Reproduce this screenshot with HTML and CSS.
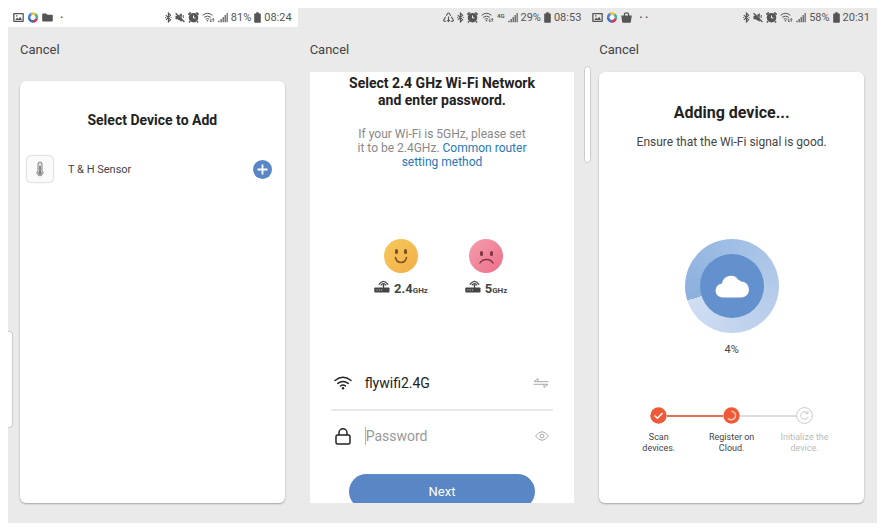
FILE: index.html
```
<!DOCTYPE html>
<html lang="en">
<head>
    <meta charset="UTF-8">
    <meta name="viewport" content="width=device-width, initial-scale=1.0">
    <title>Add Device</title>
    <link rel="stylesheet" href="styles.css">
</head>
<body>

<!-- shared icons -->
<svg class="sprite" aria-hidden="true">
    <symbol id="i-image" viewBox="0 0 11 11"><path fill-rule="evenodd" d="M1 1h9q.8 0 .8.8v7.4q0 .8-.8.8H1q-.8 0-.8-.8V1.800Q.2 1 1 1zm.5 1.200v6.600h8V2.200zM2.200 8l1.900-2.500 1.300 1.400L7.200 4.800 9 8zM3 3.200h1.400v1.200H3z"/></symbol>
    <symbol id="i-swirl" viewBox="0 0 12 12">
        <g fill="none" stroke-width="2.800">
            <path d="M1.900 5.500A4.200 4.200 0 0 1 5 1.900" stroke="#4a86e8"/>
            <path d="M4 2.300A4.200 4.200 0 0 1 9 3" stroke="#f2c037"/>
            <path d="M8.800 2.800A4.200 4.200 0 0 1 9.900 7.500" stroke="#38b6a0"/>
            <path d="M9.900 7.400A4.200 4.200 0 0 1 5.500 10.200" stroke="#d8365f"/>
            <path d="M6 10.200A4.200 4.200 0 0 1 1.800 5.500" stroke="#3f6fc4"/>
        </g>
        <path d="M6 3.300 8.700 6 6 8.700 3.300 6z" fill="#fff"/>
    </symbol>
    <symbol id="i-folder" viewBox="0 0 11 10"><path d="M1 1h3.200l1.200 1.300H10q.8 0 .8.800v5.200q0 .8-.8.8H1q-.8 0-.8-.8V1.800Q.2 1 1 1z"/></symbol>
    <symbol id="i-bag" viewBox="0 0 11 11"><path d="M.2 3.400h10.600L9.800 10q-.1.700-.8.700H2q-.7 0-.8-.700z"/><path d="M3.400 4V2.600q0-1.800 2.100-1.800t2.100 1.800V4" fill="none" stroke="currentColor" stroke-width="1.200"/></symbol>
    <symbol id="i-bt" viewBox="0 0 7 11"><path d="M.8 3.200 5.600 7.700 3.400 9.900V1.100L5.600 3.300.8 7.800M.2 5.500h.9M5.700 5.500h.9" fill="none" stroke="currentColor" stroke-width="1.100"/></symbol>
    <symbol id="i-mute" viewBox="0 0 10 10"><path d="M.5 3.300h2L6.800.7v8.600L2.500 6.700h-2z"/><path d="M1.300.4 9.600 8.700" stroke="#eee" stroke-width=".8"/><path d="M.6.700 9.400 9.500" stroke="currentColor" stroke-width="1.300"/><path d="M8.200 2.500v3" stroke="currentColor"/></symbol>
    <symbol id="i-alarm" viewBox="0 0 11 11"><circle cx="5.500" cy="5.700" r="4.800"/><path d="M.3 2.600 2.800.5M10.700 2.600 8.200.5M2 9.200 1 10.500M9 9.200l1 1.300" stroke="currentColor" stroke-width="1.600"/><path d="M5.500 3.500v2.500h2" fill="none" stroke="#eee"/></symbol>
    <symbol id="i-wifi-data" viewBox="0 0 13 11"><g fill="none" stroke="currentColor"><path d="M.6 3.300q4.900-4 9.800 0M2.200 5.300q3.300-2.500 6.600 0M3.800 7.200q1.700-1.200 3.400 0"/><path d="M8.800 6.500v3.200M7.900 8.700l.9 1.200.9-1.200M11.300 9.900V6.700M10.400 7.700l.9-1.200.9 1.200" stroke-width=".8"/></g><circle cx="5.500" cy="8.800" r=".8"/></symbol>
    <symbol id="i-signal" viewBox="0 0 10 10"><path d="M.3 8.200h1.300V9.800H.3zM2.500 6.500h1.300v3.300H2.500zM4.600 4.600h1.200v5.200H4.600zM6.600 2.600h1.200v7.200H6.600zM8.600.5h1.100v9.300H8.600z"/></symbol>
    <symbol id="i-battery" viewBox="0 0 7 11"><path d="M2.200.3h2.600v1.200h1.400q.6 0 .6.600v8q0 .6-.6.600H.8q-.6 0-.6-.600v-8q0-.6.6-.600h1.400z"/></symbol>
    <symbol id="i-recycle" viewBox="0 0 11 10"><g fill="none" stroke="currentColor" stroke-width="1.100"><path d="M3.300 3.200 4.600 1q.9-1 1.800 0l1.300 2.200M2.700 4.200.8 7.300q-.4 1.400 1 1.500h1.400M8.300 4.200l1.900 3.100q.4 1.400-1 1.500H7.800M5.500 4v5M4.200 7.700l1.300 1.300 1.300-1.300"/></g></symbol>
    <symbol id="i-router" viewBox="0 0 16 13"><rect x=".3" y="7.400" width="15.200" height="5" rx=".9"/><g fill="none" stroke="currentColor" stroke-width="1.200"><path d="M9.500 8V5.200M4.800 4.700q4.700-6.500 9.400 0M6.800 5.400q2.700-3.800 5.400 0"/></g><circle cx="9.500" cy="5" r="1"/><path d="M2.500 10h1M4.800 10h1M7.100 10h1" stroke="#fff" stroke-width=".8"/></symbol>
</svg>

<main class="screens">

    <section class="screen">
        <header class="status status-light">
            <svg class="w11"><use href="#i-image"/></svg>
            <svg class="w12"><use href="#i-swirl"/></svg>
            <svg class="w11"><use href="#i-folder"/></svg>
            <span class="more">&middot;</span>
            <span class="spacer"></span>
            <svg class="w7"><use href="#i-bt"/></svg>
            <svg class="w10"><use href="#i-mute"/></svg>
            <svg class="w11"><use href="#i-alarm"/></svg>
            <svg class="w13"><use href="#i-wifi-data"/></svg>
            <svg class="w10"><use href="#i-signal"/></svg>
            <span>81%</span>
            <svg class="w7"><use href="#i-battery"/></svg>
            <span>08:24</span>
        </header>
        <nav class="topbar"><button type="button" class="cancel">Cancel</button></nav>
        <div class="card card-devices">
            <h2>Select Device to Add</h2>
            <div class="device">
                <span class="thumb">
                    <svg width="10" height="16" viewBox="0 0 10 16"><path d="M3 9.500V3q0-2 2-2t2 2v6.500a3 3 0 1 1-4 0z" fill="#ddd" stroke="#888"/><path d="M5 5v7" stroke="#555" stroke-width="1.200"/><circle cx="5" cy="12" r="1.700" fill="#777"/></svg>
                </span>
                <span class="device-name">T &amp; H Sensor</span>
                <button type="button" class="add" aria-label="Add T &amp; H Sensor">
                    <svg width="19" height="19" viewBox="0 0 19 19"><path d="M9.500 4.500v10M4.500 9.500h10" stroke="#fff" stroke-width="1.800"/></svg>
                </button>
            </div>
        </div>
        <span class="handle handle-left"></span>
    </section>

    <section class="screen">
        <header class="status">
            <span class="spacer"></span>
            <svg class="w11"><use href="#i-recycle"/></svg>
            <svg class="w7"><use href="#i-bt"/></svg>
            <svg class="w11"><use href="#i-alarm"/></svg>
            <svg class="w13"><use href="#i-wifi-data"/></svg>
            <span class="net">4G</span>
            <svg class="w10"><use href="#i-signal"/></svg>
            <span>29%</span>
            <svg class="w7"><use href="#i-battery"/></svg>
            <span>08:53</span>
        </header>
        <nav class="topbar topbar-short"><button type="button" class="cancel">Cancel</button></nav>
        <form class="card card-wifi">
            <h2>Select 2.4 GHz Wi-Fi Network<br>and enter password.</h2>
            <p class="hint">If your Wi-Fi is 5GHz, please set<br>it to be 2.4GHz. <a href="#">Common router<br>setting method</a></p>
            <div class="bands">
                <div class="band">
                    <svg width="34" height="34" viewBox="0 0 34 34">
                        <defs><linearGradient id="gold" x1="0" y1="0" x2="1" y2="1"><stop offset="0" stop-color="#f6c95e"/><stop offset="1" stop-color="#f2ae45"/></linearGradient></defs>
                        <circle cx="17" cy="17" r="17" fill="url(#gold)"/>
                        <rect x="11" y="10" width="3" height="5" rx="1.500" fill="#7d4f25"/><rect x="20" y="10" width="3" height="5" rx="1.500" fill="#7d4f25"/>
                        <path d="M11.500 18.500q1 5 5.500 5t5.500-5" fill="none" stroke="#7d4f25" stroke-width="1.500" stroke-linecap="round"/>
                    </svg>
                    <div class="band-label"><svg width="16" height="13"><use href="#i-router"/></svg><b>2.4</b><small>GHz</small></div>
                </div>
                <div class="band">
                    <svg width="34" height="34" viewBox="0 0 34 34">
                        <defs><linearGradient id="pink" x1="0" y1="0" x2="1" y2="1"><stop offset="0" stop-color="#f4a0ac"/><stop offset="1" stop-color="#ed6c88"/></linearGradient></defs>
                        <circle cx="17" cy="17" r="17" fill="url(#pink)"/>
                        <rect x="11" y="12" width="3" height="5" rx="1.500" fill="#80363f"/><rect x="21" y="12" width="3" height="5" rx="1.500" fill="#80363f"/>
                        <path d="M11 24q2-3.500 6.500-3.500T24 24" fill="none" stroke="#80363f" stroke-width="1.500" stroke-linecap="round"/>
                    </svg>
                    <div class="band-label"><svg width="16" height="13"><use href="#i-router"/></svg><b>5</b><small>GHz</small></div>
                </div>
            </div>
            <div class="field">
                <label for="ssid" aria-label="Wi-Fi network">
                    <svg width="18" height="14" viewBox="0 0 18 14"><g fill="none" stroke="#222" stroke-width="1.500" stroke-linecap="round"><path d="M1 4.500q8-6.500 16 0M3.800 7.400q5.200-4 10.400 0M6.500 10q2.500-1.800 5 0"/></g><circle cx="9" cy="12.300" r="1.200" fill="#222"/></svg>
                </label>
                <input type="text" id="ssid" name="ssid" value="flywifi2.4G">
                <button type="button" class="icon-btn" aria-label="Switch network">
                    <svg width="16" height="10" viewBox="0 0 16 10"><path d="M15.500 3.700H1L5 .5M.5 6.300H15L11 9.500M5 .5v3M11 9.500v-3" fill="none" stroke="#aaa"/></svg>
                </button>
            </div>
            <div class="field field-password">
                <label for="password" aria-label="Password">
                    <svg width="16" height="17" viewBox="0 0 16 17"><g fill="none" stroke="#222" stroke-width="1.500"><rect x="1" y="7" width="14" height="9" rx="1.500"/><path d="M4 7V4.800a4 4 0 0 1 8 0V7"/></g></svg>
                </label>
                <input type="password" id="password" name="password" placeholder="Password">
                <button type="button" class="icon-btn" aria-label="Show password">
                    <svg width="14" height="10" viewBox="0 0 14 10"><path d="M.6 5q6.400-8.600 12.800 0Q7 13.600.6 5z" fill="none" stroke="#aaa"/><circle cx="7" cy="5" r="1.900" fill="none" stroke="#aaa"/></svg>
                </button>
            </div>
            <div class="submit-row"><button type="button" class="next">Next</button></div>
        </form>
        <span class="handle handle-right"></span>
    </section>

    <section class="screen">
        <header class="status status-last">
            <svg class="w11"><use href="#i-image"/></svg>
            <svg class="w12"><use href="#i-swirl"/></svg>
            <svg class="w11"><use href="#i-bag"/></svg>
            <span class="more">&middot;&thinsp;&middot;</span>
            <span class="spacer"></span>
            <svg class="w7"><use href="#i-bt"/></svg>
            <svg class="w10"><use href="#i-mute"/></svg>
            <svg class="w11"><use href="#i-alarm"/></svg>
            <svg class="w13"><use href="#i-wifi-data"/></svg>
            <svg class="w10"><use href="#i-signal"/></svg>
            <span>58%</span>
            <svg class="w7"><use href="#i-battery"/></svg>
            <span>20:31</span>
        </header>
        <nav class="topbar topbar-short"><button type="button" class="cancel">Cancel</button></nav>
        <div class="card card-progress">
            <h2>Adding device...</h2>
            <p class="note">Ensure that the Wi-Fi signal is good.</p>
            <div class="ring">
                <div class="ring-core">
                    <svg width="34" height="24" viewBox="0 0 34 24"><path d="M8 23.500a7 7 0 0 1-1-14 9 9 0 0 1 16.500-3.500 5 5 0 0 1 2.500 1.500 8 8 0 0 1 0 16z" fill="#fff"/></svg>
                </div>
            </div>
            <p class="percent">4%</p>
            <div class="track">
                <svg width="17" height="17" viewBox="0 0 17 17"><circle cx="8.500" cy="8.500" r="8.200" fill="#ee5a38"/><path d="M4.500 8.500 7.500 11.300 12.500 6" fill="none" stroke="#fff" stroke-width="1.500"/></svg>
                <span class="line line-done"></span>
                <svg width="17" height="17" viewBox="0 0 17 17"><circle cx="8.500" cy="8.500" r="8.200" fill="#ee5a38"/><path d="M8.500 4.200a4.300 4.300 0 1 1-3.500 7" fill="none" stroke="#fbc6b6" stroke-width="1.500"/></svg>
                <span class="line"></span>
                <svg width="17" height="17" viewBox="0 0 17 17"><g fill="none" stroke="#c8c8c8"><circle cx="8.500" cy="8.500" r="7.900"/><path d="M11.500 6A3.800 3.800 0 1 0 12.200 9.500M12 4v2.500H9.500"/></g></svg>
            </div>
            <ol class="steps">
                <li>Scan<br>devices.</li>
                <li>Register on<br>Cloud.</li>
                <li class="pending">Initialize the<br>device.</li>
            </ol>
        </div>
    </section>

</main>

</body>
</html>
```
FILE: styles.css
```
* {
    box-sizing: border-box;
}
body {
    margin: 0;
    background: #fff;
    font-family: Roboto, "Liberation Sans", sans-serif;
    font-size: 12px;
    color: #444;
}
h2, p, ol {
    margin: 0;
    padding: 0;
}
button, input {
    font-family: inherit;
    border: none;
    background: none;
    padding: 0;
}
button {
    cursor: pointer;
}
svg {
    display: block;
    flex: none;
}
.sprite {
    width: 0;
    height: 0;
    position: absolute;
}

.screens {
    display: grid;
    grid-template-columns: repeat(3, minmax(0, 1fr));
    min-height: 100vh;
    padding: 8px 8px 5px;
}
.screen {
    position: relative;
    display: flex;
    flex-direction: column;
    background: #eaeaea;
    padding-bottom: 20px;
}

/* status bar */
.status {
    display: flex;
    align-items: center;
    gap: 3px;
    height: 19px;
    padding: 0 6px 0 5px;
    font-size: 11px;
    color: #555;
}
.status svg {
    height: 11px;
    fill: currentColor;
}
.status-light {
    background: #fff;
}
.status-last {
    padding-right: 7px;
}
.w7 { width: 7px; }
.w10 { width: 10px; }
.w11 { width: 11px; }
.w12 { width: 12px; }
.w13 { width: 13px; }
.more {
    margin-left: 4px;
    font-weight: bold;
}
.spacer {
    flex: 1;
}
.net {
    font-size: 6px;
    font-weight: bold;
    padding-bottom: 4px;
}

.topbar {
    height: 54px;
    padding: 14px 12px 0;
}
.topbar-short {
    height: 45px;
}
.cancel {
    display: block;
    font-size: 13px;
    line-height: 18px;
    color: #444;
}

/* cards */
.card {
    flex: 1;
    margin: 0 13px 0 12px;
    background: #fff;
    border-radius: 6px;
    box-shadow: 0 1px 2px rgba(0, 0, 0, 0.3);
    text-align: center;
}
.card h2 {
    font-size: 14px;
    line-height: 17px;
    font-weight: bold;
    color: #222;
}

.card-devices {
    padding-top: 31px;
}
.device {
    display: flex;
    align-items: center;
    margin-top: 27px;
    padding: 0 13px 0 7px;
}
.thumb {
    display: flex;
    align-items: center;
    justify-content: center;
    width: 26px;
    height: 26px;
    border-radius: 4px;
    background: #fafafa;
    box-shadow: 0 0 2px rgba(0, 0, 0, 0.4);
}
.device-name {
    flex: 1;
    margin-left: 15px;
    text-align: left;
    font-size: 11px;
}
.add {
    width: 19px;
    height: 19px;
    border-radius: 50%;
    background: #5986c4;
}

.card-wifi {
    padding-top: 3px;
    border-radius: 0;
    box-shadow: none;
}
.hint {
    margin-top: 18px;
    font-size: 12px;
    line-height: 14px;
    color: #888;
}
.hint a {
    color: #2878b8;
    text-decoration: none;
}
.bands {
    display: flex;
    justify-content: center;
    gap: 32px;
    margin: 70px 0 0 3px;
}
.band {
    display: flex;
    flex-direction: column;
    align-items: center;
    width: 53px;
}
.band-label {
    display: flex;
    align-items: baseline;
    margin-top: 7px;
    line-height: 16px;
    color: #444;
    white-space: nowrap;
}
.band-label svg {
    fill: currentColor;
    margin-right: 4px;
}
.band-label b {
    font-size: 13px;
}
.band-label small {
    font-size: 8px;
    font-weight: bold;
}

.field {
    display: flex;
    align-items: center;
    height: 54px;
    margin: 58px 21px 0;
    padding: 0 4px 0 3px;
    border-bottom: 2px solid #e8e8e8;
}
.field label {
    display: flex;
    justify-content: center;
    width: 18px;
}
.field input {
    flex: 1;
    min-width: 0;
    height: 18px;
    margin-left: 13px;
    font-size: 14px;
    color: #222;
    outline: none;
}
.field-password {
    height: 50px;
    margin-top: 0;
    border-bottom: none;
}
.field-password input {
    border-left: 1px solid #f0a060;
}
.field input::placeholder {
    color: #999;
}

/* the button runs under the bottom edge of the card */
.submit-row {
    height: 29px;
    margin: 13px 39px 0;
    overflow: hidden;
}
.next {
    width: 100%;
    height: 35px;
    border-radius: 18px;
    background: #5986c4;
    color: #fff;
    font-size: 13px;
}

.card-progress {
    padding-top: 32px;
}
.card-progress h2 {
    font-size: 16px;
    line-height: 18px;
}
.note {
    margin-top: 12px;
    line-height: 16px;
}
.ring {
    display: flex;
    align-items: center;
    justify-content: center;
    width: 94px;
    height: 94px;
    margin: 89px auto 0;
    border-radius: 50%;
    background: conic-gradient(from 252deg, #8cafdc, #9dbce4 25%, #b3cae9 55%, #d0def2);
}
.ring-core {
    display: flex;
    align-items: center;
    justify-content: center;
    width: 64px;
    height: 64px;
    border-radius: 50%;
    background: #6391cd;
}
.percent {
    margin-top: 10px;
    font-size: 11px;
    line-height: 14px;
}
.track {
    display: flex;
    align-items: center;
    margin-top: 50px;
    padding: 0 51px;
}
.line {
    flex: 1;
    height: 2px;
    background: #ddd;
}
.line-done {
    background: #dd7255;
}
.steps {
    display: grid;
    grid-template-columns: repeat(3, 1fr);
    margin-top: 8px;
    padding: 0 23px;
    list-style: none;
    font-size: 9px;
    line-height: 11px;
    white-space: nowrap;
}
.pending {
    color: #bbb;
}

/* edge panel handles */
.handle {
    position: absolute;
    background: #fff;
    border: 1px solid #ccc;
}
.handle-left {
    left: 0;
    top: 323px;
    width: 5px;
    height: 97px;
    border-left: none;
    border-radius: 0 4px 4px 0;
}
.handle-right {
    right: -4px;
    top: 58px;
    width: 7px;
    height: 97px;
    border-radius: 4px;
    z-index: 1;
}
```
